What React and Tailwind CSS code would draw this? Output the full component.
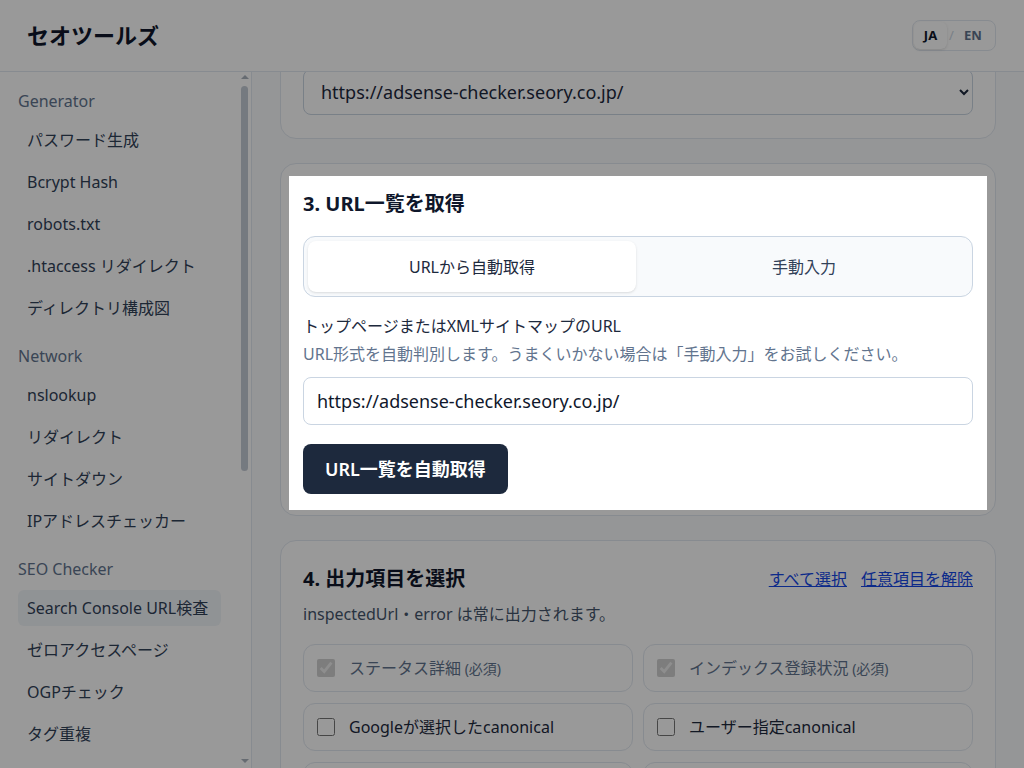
import { useLayoutEffect, useRef } from "react";

const nav = [
  {
    title: "Generator",
    items: ["パスワード生成", "Bcrypt Hash", "robots.txt", ".htaccess リダイレクト", "ディレクトリ構成図"],
  },
  {
    title: "Network",
    items: ["nslookup", "リダイレクト", "サイトダウン", "IPアドレスチェッカー"],
  },
  {
    title: "SEO Checker",
    items: [
      "Search Console URL検査",
      "ゼロアクセスページ",
      "OGPチェック",
      "タグ重複",
      "見出し構造",
      "内部リンク",
      "構造化データ",
    ],
  },
  {
    title: "Utility",
    items: ["JSON整形", "Base64変換", "URLエンコード", "文字数カウント", "QRコード生成", "UNIXタイム変換"],
  },
];

const fields = [
  { label: "ステータス詳細", required: true },
  { label: "インデックス登録状況", required: true },
  { label: "Googleが選択したcanonical" },
  { label: "ユーザー指定canonical" },
  { label: "最終クロール日時" },
  { label: "クロールを許可" },
  { label: "ページの取得" },
  { label: "robots.txt によるブロック" },
];

function Sidebar() {
  return (
    <aside className="w-[252px] shrink-0 border-r border-slate-200 bg-white flex overflow-hidden">
      <nav className="flex-1 min-w-0 overflow-hidden pl-[18px] pr-[17px] pt-[17px] pb-4 flex flex-col gap-[18px]">
        {nav.map((sec) => (
          <div key={sec.title}>
            <div className="h-6 leading-6 text-base text-slate-500">{sec.title}</div>
            <ul className="mt-[9px] flex flex-col gap-1.5">
              {sec.items.map((item) => (
                <li
                  key={item}
                  className={`h-9 flex items-center px-[9px] rounded-md text-base text-slate-700 whitespace-nowrap ${
                    item === "Search Console URL検査" ? "bg-slate-100" : ""
                  }`}
                >
                  {item}
                </li>
              ))}
            </ul>
          </div>
        ))}
      </nav>
      {/* scrollbar */}
      <div className="w-[13px] shrink-0 flex flex-col items-center pt-[3px] pb-[5px]">
        <div className="w-0 h-0 border-x-[4px] border-x-transparent border-b-[4px] border-b-[#aab2bd]" />
        <div className="mt-[7px] w-[7px] h-[385px] rounded-full bg-[#c4cbd5]" />
        <div className="flex-1" />
        <div className="w-0 h-0 border-x-[4px] border-x-transparent border-t-[4px] border-t-[#aab2bd]" />
      </div>
    </aside>
  );
}

export default function App() {
  const mainRef = useRef(null);
  const stepRef = useRef(null);

  useLayoutEffect(() => {
    if (mainRef.current && stepRef.current) {
      mainRef.current.scrollTop = stepRef.current.offsetTop - 91;
    }
  }, []);

  return (
    <div
      className="h-screen flex flex-col bg-white text-slate-800"
      style={{ fontFamily: '"Noto Sans", "Noto Sans CJK JP", sans-serif' }}
    >
      <header className="h-[72px] shrink-0 border-b border-slate-200 bg-white flex items-center justify-between pl-[27px] pr-[28px]">
        <h1 className="text-[22px] font-bold text-slate-900">セオツールズ</h1>
        <div className="w-[84px] flex items-center h-[31px] rounded-lg border border-slate-200 p-px text-[13px] font-bold">
          <span className="h-[27px] w-[33px] flex items-center justify-center rounded-md bg-white shadow-sm text-slate-900">
            JA
          </span>
          <span className="w-[9px] text-center text-slate-300 font-normal">/</span>
          <span className="h-[27px] w-[34px] flex items-center justify-center text-slate-500">EN</span>
        </div>
      </header>

      <div className="flex-1 flex min-h-0">
        <Sidebar />

        <main ref={mainRef} className="relative flex-1 overflow-hidden bg-slate-50">
          <div className="px-7 py-7 flex flex-col gap-6">
            <section className="rounded-2xl border border-slate-200 bg-white px-[22px] pt-6 pb-[23px]">
              <h2 className="text-xl leading-7 font-bold text-slate-900">1. Googleアカウントと連携</h2>
              <p className="mt-3 text-base text-slate-600">Search Console の権限があるアカウントでログインしてください。</p>
              <button className="mt-4 h-[50px] px-[22px] rounded-lg bg-slate-800 text-white text-lg font-semibold">
                ログイン済み
              </button>
            </section>

            <section className="rounded-2xl border border-slate-200 bg-white px-[22px] pt-6 pb-[23px]">
              <h2 className="text-xl leading-7 font-bold text-slate-900">2. プロパティを選択</h2>
              <label className="mt-4 block text-base text-slate-800">Search Console プロパティ</label>
              <select
                defaultValue="a"
                className="mt-3 block w-full h-[46px] rounded-lg border border-slate-300 bg-white px-[13px] text-lg text-slate-800"
              >
                <option value="a">https://adsense-checker.seory.co.jp/</option>
              </select>
            </section>

            <section
              ref={stepRef}
              className="rounded-2xl border border-slate-200 bg-white px-[22px] pt-6 pb-[21px]"
            >
              <div className="relative z-50 bg-white -mx-[14px] -mt-3 -mb-4 px-[14px] pt-3 pb-4">
                <h2 className="mt-0.5 text-xl leading-7 font-bold text-slate-900">3. URL一覧を取得</h2>
                <div className="mt-[18px] h-[61px] rounded-xl border border-slate-300 bg-slate-50 p-1 flex gap-1">
                  <button className="flex-1 rounded-lg bg-white shadow-sm text-base text-slate-800">
                    URLから自動取得
                  </button>
                  <button className="flex-1 rounded-lg text-base text-slate-700">手動入力</button>
                </div>
                <p className="mt-[17px] text-base leading-6 text-slate-800">トップページまたはXMLサイトマップのURL</p>
                <p className="mt-1 text-base leading-6 text-slate-500">
                  URL形式を自動判別します。うまくいかない場合は「手動入力」をお試しください。
                </p>
                <input
                  readOnly
                  value="https://adsense-checker.seory.co.jp/"
                  className="mt-[11px] block w-full h-12 rounded-lg border border-slate-300 bg-white px-[13px] text-lg text-slate-900 outline-none"
                />
                <button className="mt-[19px] h-[50px] px-[22px] rounded-lg bg-slate-800 text-white text-lg font-semibold">
                  URL一覧を自動取得
                </button>
              </div>
            </section>

            <section className="rounded-2xl border border-slate-200 bg-white px-[22px] pt-6 pb-6">
              <div className="flex items-center justify-between">
                <h2 className="text-xl leading-7 font-bold text-slate-900">4. 出力項目を選択</h2>
                <div className="flex gap-[14px] text-base text-blue-700">
                  <button className="underline">すべて選択</button>
                  <button className="underline">任意項目を解除</button>
                </div>
              </div>
              <p className="mt-[9px] text-base leading-6 text-slate-600">inspectedUrl・error は常に出力されます。</p>
              <div className="mt-[18px] grid grid-cols-2 gap-x-[10px] gap-y-[11px]">
                {fields.map((f) => (
                  <label
                    key={f.label}
                    className="h-12 flex items-center gap-[14px] rounded-xl border border-slate-200 px-[13px]"
                  >
                    <input
                      type="checkbox"
                      className="w-[18px] h-[18px] shrink-0"
                      checked={!!f.required}
                      disabled={!!f.required}
                      readOnly
                    />
                    <span className={`text-base ${f.required ? "text-slate-500" : "text-slate-800"}`}>
                      {f.label}
                      {f.required && <span className="text-sm"> (必須)</span>}
                    </span>
                  </label>
                ))}
              </div>
            </section>
          </div>
        </main>
      </div>

      <div className="fixed inset-0 z-40 bg-black/40" />
    </div>
  );
}
